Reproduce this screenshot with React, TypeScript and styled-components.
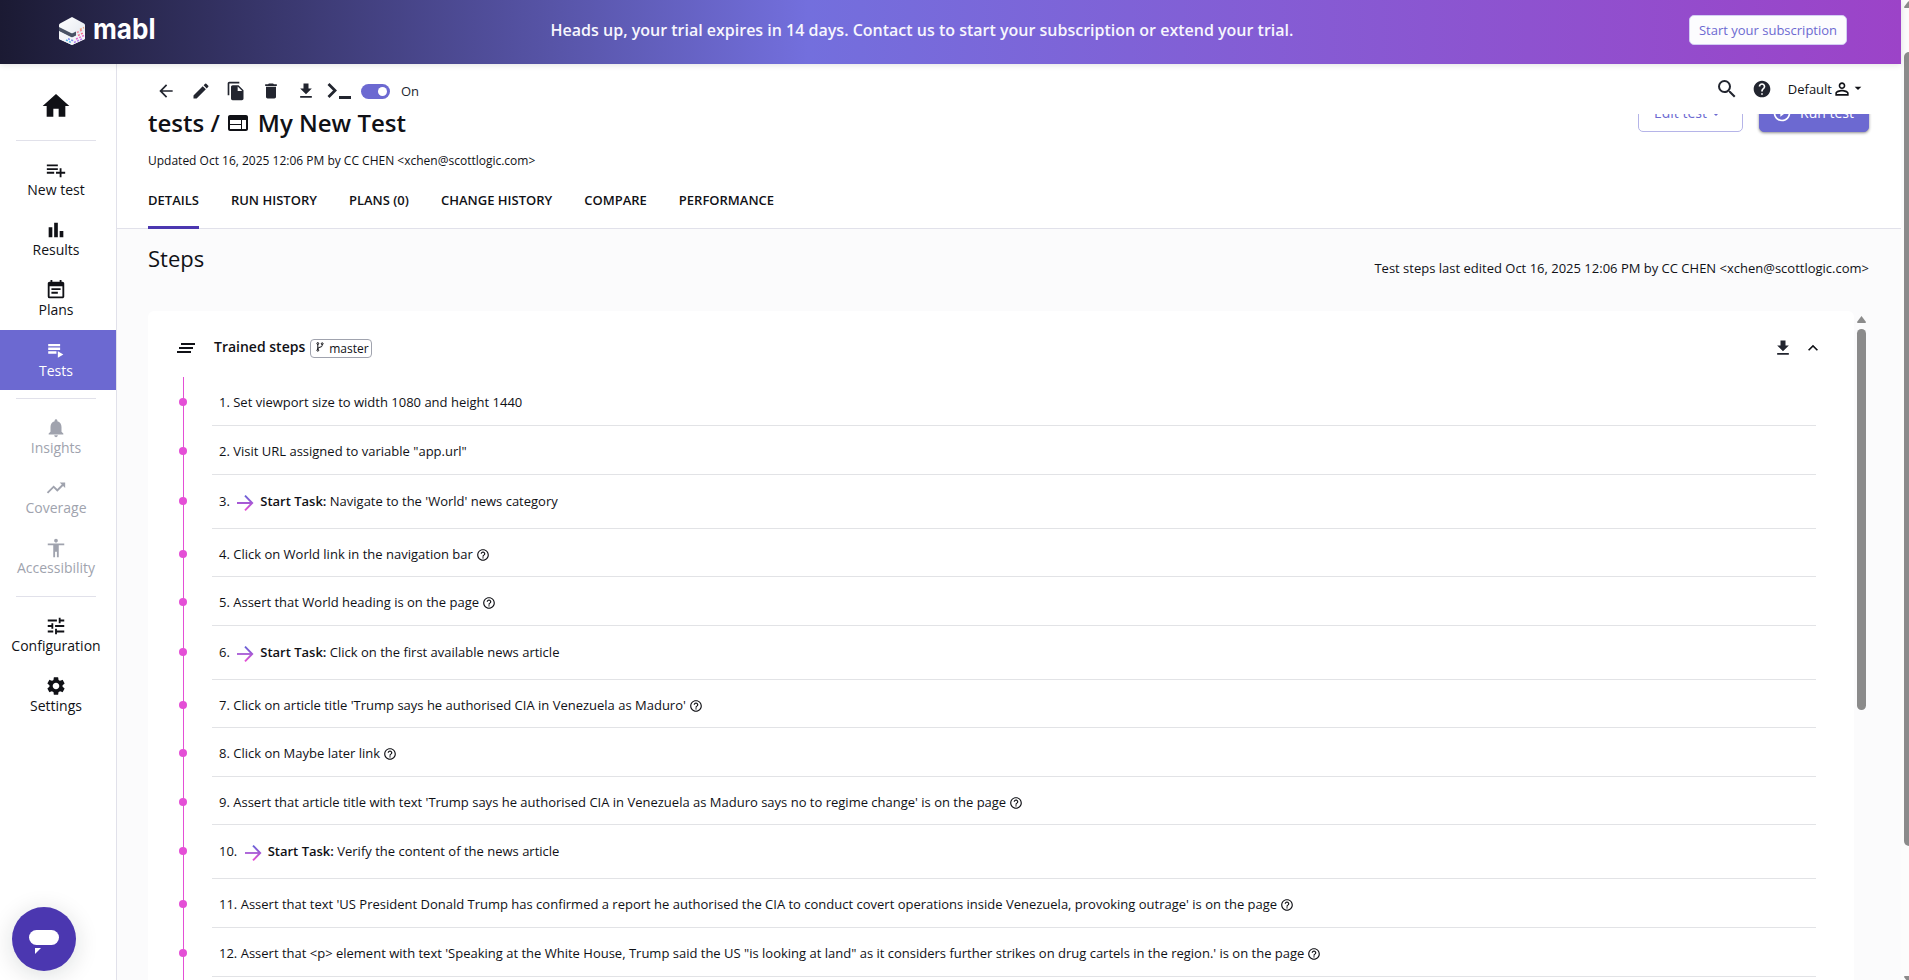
import React from "react";
import styled, { createGlobalStyle } from "styled-components";
import {
  MdAccessibility,
  MdArrowBack,
  MdArrowDropDown,
  MdBarChart,
  MdClearAll,
  MdDelete,
  MdEdit,
  MdEventNote,
  MdExpandLess,
  MdFileCopy,
  MdFileDownload,
  MdHelp,
  MdHelpOutline,
  MdHome,
  MdNotifications,
  MdPermIdentity,
  MdPlayCircleOutline,
  MdSearch,
  MdSettings,
  MdTrendingUp,
  MdTune,
  MdWeb,
} from "react-icons/md";

const GlobalStyle = createGlobalStyle`
  * { box-sizing: border-box; }
  body {
    margin: 0;
    overflow: hidden;
    background: #fbfbfc;
    color: #101116;
    font-family: "Open Sans", "Noto Sans", sans-serif;
    font-size: 13px;
  }
  svg { display: block; flex: none; }
`;

const Window = styled.div`
  display: flex;
  width: 1909px;
  height: 980px;
  overflow: hidden;
`;

const AppShell = styled.div`
  display: flex;
  flex-direction: column;
  width: 1901px;
`;

const Banner = styled.header`
  position: relative;
  z-index: 3;
  display: grid;
  grid-template-columns: 500px 1fr 500px;
  align-items: center;
  height: 64px;
  flex: none;
  background: linear-gradient(90deg, #1b1a33 0%, #736fdd 42.5%, #9c43c8 100%);
  box-shadow: 0 1px 6px rgba(0, 0, 0, 0.12);
`;

const LogoSlot = styled.div`
  padding: 0 0 2px 58px;
`;

const LogoSvg = styled.svg`
  overflow: visible;
`;

const BannerText = styled.div`
  padding-right: 57px;
  padding-bottom: 4px;
  text-align: center;
  color: #f7f6fd;
  font-size: 16px;
  font-weight: 600;
  white-space: nowrap;
`;

const SubscribeButton = styled.button`
  justify-self: end;
  width: 158px;
  height: 30px;
  margin: 0 54px 4px 0;
  padding: 0;
  border: 1px solid #d3cdf3;
  border-radius: 5px;
  background: #fcfcfe;
  color: #6c69d1;
  font: 400 13px "Open Sans", sans-serif;
`;

const Body = styled.div`
  display: flex;
  flex: 1;
  min-height: 0;
`;

const Sidebar = styled.nav`
  display: flex;
  flex-direction: column;
  width: 117px;
  flex: none;
  border-right: 1px solid #e1e1ea;
  background: #fff;
`;

const HomeLink = styled.div`
  display: flex;
  justify-content: center;
  height: 76px;
  padding: 26px 4px 0 0;
`;

const Divider = styled.div`
  width: 80px;
  height: 1px;
  margin-left: 16px;
  background: #e1e1ea;
`;

const NavGroup = styled.div`
  display: flex;
  flex-direction: column;
  padding: 9px 0 8px;
`;

const NavItem = styled.div<{ $state?: "active" | "muted" }>`
  display: flex;
  flex-direction: column;
  align-items: center;
  height: 60px;
  padding: 9px 4px 0 0;
  font-size: 14px;
  line-height: 20px;
  color: ${(p) =>
    p.$state === "active" ? "#fff" : p.$state === "muted" ? "#a0a3ae" : "#101116"};
  background: ${(p) => (p.$state === "active" ? "#6c69d1" : "transparent")};

  svg { margin-bottom: ${(p) => (p.$state === "active" ? 0 : -1)}px; }
`;

const Main = styled.main`
  display: flex;
  flex-direction: column;
  flex: 1;
  min-width: 0;
`;

const AppBar = styled.div`
  position: relative;
  z-index: 2;
  display: flex;
  justify-content: space-between;
  height: 50px;
  flex: none;
  padding: 0 0 0 39px;
  background: #fff;
  color: #22252f;
`;

const Tools = styled.div`
  display: flex;
  align-items: center;
  gap: 15px;
  height: 54px;
`;

const TerminalSlot = styled.div`
  margin: 0 1px 0 -4px;
`;

const Toggle = styled.div`
  display: flex;
  justify-content: flex-end;
  align-items: center;
  width: 29px;
  height: 15px;
  padding-right: 3px;
  margin-left: -6px;
  border-radius: 8px;
  background: #6c69d1;

  &::after {
    content: "";
    width: 9px;
    height: 9px;
    border-radius: 50%;
    background: #fff;
  }
`;

const ToggleLabel = styled.span`
  margin: 0 0 1px -4px;
  font-size: 13px;
`;

const Account = styled.div`
  display: flex;
  align-items: center;
  gap: 13px;
  height: 50px;
  padding-right: 35px;
`;

const Workspace = styled.div`
  display: flex;
  align-items: center;
  margin-left: 3px;
  color: #101116;
  font-size: 13px;

  svg:last-child { margin: -2px 0 0 -2px; }
`;

const PageHeader = styled.section`
  display: flex;
  justify-content: space-between;
  height: 115px;
  flex: none;
  padding: 0 32px 0 31px;
  border-bottom: 1px solid #e1e1ea;
  background: #fff;
`;

const HeaderText = styled.div`
  display: flex;
  flex-direction: column;
`;

const Title = styled.h1`
  display: flex;
  align-items: center;
  height: 32px;
  margin: -8px 0 0;
  font-size: 24px;
  font-weight: 600;
  white-space: pre;

  svg { margin: 2px 8px 0 6px; }
`;

const Updated = styled.div`
  height: 20px;
  margin-top: 13px;
  font-size: 12px;
  line-height: 20px;
`;

const Tabs = styled.div`
  display: flex;
  gap: 32px;
  margin-top: 15px;
`;

const Tab = styled.div<{ $active?: boolean }>`
  height: 43px;
  border-bottom: 3px solid ${(p) => (p.$active ? "#4b37b0" : "transparent")};
  font-size: 13px;
  font-weight: 600;
  line-height: 28px;
  white-space: nowrap;
`;

const Actions = styled.div`
  display: flex;
  gap: 16px;
  margin-top: -20px;
`;

const ActionButton = styled.button<{ $primary?: boolean }>`
  display: flex;
  align-items: center;
  justify-content: center;
  width: ${(p) => (p.$primary ? 110 : 105)}px;
  height: 38px;
  padding: ${(p) => (p.$primary ? "0 2px 2px 0" : "0 3px 2px 0")};
  gap: ${(p) => (p.$primary ? 8 : 1)}px;
  border: 1px solid ${(p) => (p.$primary ? "#6c69d1" : "#b5b4e8")};
  border-radius: 5px;
  background: ${(p) => (p.$primary ? "#6c69d1" : "#fff")};
  color: ${(p) => (p.$primary ? "#fff" : "#6c69d1")};
  box-shadow: ${(p) => (p.$primary ? "0 1px 3px rgba(0, 0, 0, 0.45)" : "none")};
  font: 500 14px "Open Sans", sans-serif;

  svg { margin-top: ${(p) => (p.$primary ? 1 : 4)}px; }
`;

const Content = styled.section`
  display: flex;
  flex-direction: column;
  flex: 1;
  min-height: 0;
  padding: 0 32px 0 31px;
`;

const SectionHead = styled.div`
  display: flex;
  justify-content: space-between;
  height: 82px;
  flex: none;
`;

const SectionTitle = styled.h2`
  margin: 13px 0 0;
  font-size: 22px;
  font-weight: 400;
  line-height: 32px;
`;

const LastEdited = styled.div`
  margin-top: 29px;
  font-size: 13px;
  line-height: 20px;
`;

const ScrollArea = styled.div`
  display: flex;
  flex: 1;
  min-height: 0;
`;

const Card = styled.div`
  flex: 1;
  min-width: 0;
  overflow: hidden;
  padding: 0 38px 0 28px;
  border-radius: 6px 6px 0 0;
  background: #fff;
`;

const CardHead = styled.div`
  display: flex;
  align-items: center;
  height: 66px;
  margin-left: -2px;
  padding-top: 8px;
`;

const CardTitle = styled.div`
  margin-left: 16px;
  padding-bottom: 3px;
  font-size: 14px;
  font-weight: 600;
`;

const Branch = styled.div`
  display: flex;
  align-items: center;
  width: 62px;
  height: 19px;
  margin-left: 5px;
  padding-left: 5px;
  gap: 5px;
  border: 1px solid #a0a3ae;
  border-radius: 4px;
  font-size: 12px;
  font-weight: 500;

  svg { margin-bottom: 3px; }
`;

const HeadActions = styled.div`
  display: flex;
  gap: 10px;
  margin-left: auto;
  margin-right: -7px;
`;

const Step = styled.div<{ $height: number }>`
  display: flex;
  height: ${(p) => p.$height}px;
`;

const Rail = styled.div<{ $task?: boolean }>`
  display: flex;
  justify-content: center;
  width: 15px;
  margin-right: 21px;
  padding: ${(p) => (p.$task ? 22 : 21)}px 0.4px 0 0;
  background: linear-gradient(#e44fd6, #e44fd6) 7px 0 / 1px 100% no-repeat;

  &::before {
    content: "";
    width: 8px;
    height: 8px;
    border-radius: 50%;
    background: #e44fd6;
  }
`;

const StepBody = styled.div<{ $task?: boolean }>`
  display: flex;
  align-items: flex-start;
  flex: 1;
  padding: ${(p) => (p.$task ? 16 : 15)}px 0 0 7px;
  border-bottom: 1px solid #e2e3e6;
  font-size: 13px;
  line-height: 20px;
  white-space: pre;

  b { font-weight: 600; }
`;

const HelpMark = styled(MdHelpOutline)`
  margin: 4px 0 0 3px;
`;

const TaskArrow = styled.svg`
  margin: 0 3px 0 0;
`;

const ScrollTrack = styled.div`
  display: flex;
  flex-direction: column;
  align-items: center;
  width: 15px;
  padding-top: 5px;
  gap: 6px;
`;

const ScrollThumb = styled.div`
  width: 9px;
  height: 381px;
  border-radius: 5px;
  background: #8b8b8b;
`;

const WindowTrack = styled.div`
  display: flex;
  flex-direction: column;
  width: 8px;
  padding: 1px 0 0 3px;
  overflow: hidden;
  background: #fcfcfc;
`;

const WindowThumb = styled.div`
  width: 10px;
  height: 794px;
  flex: none;
  margin: 44px 0 130px;
  border-radius: 5px;
  background: #8b8b8b;
`;

const ChatButton = styled.button`
  position: fixed;
  left: 12px;
  bottom: 9px;
  display: flex;
  align-items: center;
  justify-content: center;
  width: 64px;
  height: 64px;
  padding: 8px 0 0;
  border: 0;
  border-radius: 50%;
  background: #4b37b0;
  box-shadow: 0 4px 24px rgba(0, 30, 30, 0.14);
`;

const Logo = () => (
  <LogoSvg width="120" height="32" viewBox="0 0 120 32">
    <defs>
      <linearGradient id="cube" x1="0" y1="0" x2="1" y2="1">
        <stop offset="0" stopColor="#ffffff" />
        <stop offset="1" stopColor="#dfe4ec" />
      </linearGradient>
    </defs>
    <path d="M14 2 26 8.5Q27 9 27 10V23Q27 24 26 24.6L14 30 2 24.6Q1 24 1 23V10Q1 9 2 8.5Z" fill="url(#cube)" />
    <path d="M1 12 13 18Q14 18.5 15 18L18 16.5V20.5L15 22Q14 22.5 13 22L1 16Z" fill="#4a5265" />
    <path d="M1 16.5 13 22.5Q14 23 15 22.5L27 16V23Q27 24 26 24.6L14 30 2 24.6Q1 24 1 23Z" fill="#f3f4f8" />
    <g strokeWidth="1.5" strokeDasharray="2 1.4">
      <path d="M19 17.5 25 14.5" stroke="#f08fa0" />
      <path d="M20 20.5 26 17.5" stroke="#f26d8d" />
      <path d="M18 24 26 20.5" stroke="#e46ad0" />
      <path d="M16 27.5 25 23.5" stroke="#b27af0" />
      <path d="M8 25 13 27.5" stroke="#54b9e6" />
      <path d="M10 23.8 16 26" stroke="#7f8ef0" />
      <path d="M22 14.5 26 12.5" stroke="#f2a07a" />
    </g>
    <text
      x="35"
      y="23.6"
      textLength="62.5"
      lengthAdjust="spacingAndGlyphs"
      fontFamily="Inter, sans-serif"
      fontSize="28.5"
      fontWeight="700"
      fill="#fff"
    >
      mabl
    </text>
  </LogoSvg>
);

const PlaylistAddIcon = () => (
  <svg width="22" height="22" viewBox="0 0 24 24" fill="currentColor">
    <path d="M14 10H2v2h12v-2zm0-4H2v2h12V6zm4 8v-4h-2v4h-4v2h4v4h2v-4h4v-2h-4zM2 16h8v-2H2v2z" />
  </svg>
);

const PlaylistPlayIcon = () => (
  <svg width="22" height="22" viewBox="0 0 24 24" fill="currentColor">
    <path d="M3.5 9.4h13v2.6h-13zm0-4h13v2.6h-13zm0 8h9v2.6h-9zm10.5 0v7l6-3.5z" />
  </svg>
);

const TerminalIcon = () => (
  <svg width="24" height="18" viewBox="0 0 24 18">
    <path d="M1.5 2 8 8.5 1.5 15" fill="none" stroke="currentColor" strokeWidth="2.8" />
    <path d="M12 14h12v3H12z" fill="currentColor" />
  </svg>
);

const BranchIcon = () => (
  <svg width="8" height="10" viewBox="0 0 8 10" fill="none" stroke="currentColor">
    <path d="M1.8 2v6M6.2 2.5v.8q0 1.7-2.2 1.9-2.2.2-2.2 1.8" strokeWidth="1" />
    <circle cx="1.8" cy="1.5" r=".9" />
    <circle cx="6.2" cy="1.7" r=".9" />
    <circle cx="1.8" cy="8.3" r=".9" />
  </svg>
);

const StartArrow = () => (
  <TaskArrow width="24" height="24" viewBox="0 0 24 24">
    <defs>
      <linearGradient id="task" x1="0" y1="4" x2="0" y2="20" gradientUnits="userSpaceOnUse">
        <stop offset="0" stopColor="#5f62d6" />
        <stop offset="1" stopColor="#ee4fd3" />
      </linearGradient>
    </defs>
    <path d="M12 4.6 19.2 12 12 19.4" fill="none" stroke="url(#task)" strokeWidth="1.9" />
    <path d="M4 11.1h14.6v1.8H4z" fill="url(#task)" />
  </TaskArrow>
);

const UpTriangle = () => (
  <svg width="9" height="7" viewBox="0 0 9 7">
    <path d="M4.5 0 9 6Q9 7 8 7H1Q0 7 0 6Z" fill="#8b8b8b" />
  </svg>
);

const DownTriangle = () => (
  <svg width="9" height="7" viewBox="0 0 9 7">
    <path d="M4.5 7 9 1Q9 0 8 0H1Q0 0 0 1Z" fill="#8b8b8b" />
  </svg>
);

type StepData = { h: number; text: string; task?: boolean; help?: boolean };

const steps: StepData[] = [
  { h: 49, text: "Set viewport size to width 1080 and height 1440" },
  { h: 49, text: 'Visit URL assigned to variable "app.url"' },
  { h: 54, text: "Navigate to the 'World' news category", task: true },
  { h: 48, text: "Click on World link in the navigation bar", help: true },
  { h: 49, text: "Assert that World heading is on the page", help: true },
  { h: 54, text: "Click on the first available news article", task: true },
  { h: 48, text: "Click on article title 'Trump says he authorised CIA in Venezuela as Maduro'", help: true },
  { h: 49, text: "Click on Maybe later link", help: true },
  {
    h: 48,
    text: "Assert that article title with text 'Trump says he authorised CIA in Venezuela as Maduro says no to regime change' is on the page",
    help: true,
  },
  { h: 54, text: "Verify the content of the news article", task: true },
  {
    h: 49,
    text: "Assert that text 'US President Donald Trump has confirmed a report he authorised the CIA to conduct covert operations inside Venezuela, provoking outrage' is on the page",
    help: true,
  },
  {
    h: 49,
    text: "Assert that <p> element with text 'Speaking at the White House, Trump said the US \"is looking at land\" as it considers further strikes on drug cartels in the region.' is on the page",
    help: true,
  },
  { h: 49, text: "" },
];

const tabs = ["DETAILS", "RUN HISTORY", "PLANS (0)", "CHANGE HISTORY", "COMPARE", "PERFORMANCE"];

export default function App() {
  return (
    <Window>
      <GlobalStyle />
      <AppShell>
        <Banner>
          <LogoSlot>
            <Logo />
          </LogoSlot>
          <BannerText>
            Heads up, your trial expires in 14 days. Contact us to start your subscription or extend your trial.
          </BannerText>
          <SubscribeButton>Start your subscription</SubscribeButton>
        </Banner>
        <Body>
          <Sidebar>
            <HomeLink>
              <MdHome size={32} />
            </HomeLink>
            <Divider />
            <NavGroup>
              <NavItem><PlaylistAddIcon />New test</NavItem>
              <NavItem><MdBarChart size={22} />Results</NavItem>
              <NavItem><MdEventNote size={22} />Plans</NavItem>
              <NavItem $state="active"><PlaylistPlayIcon />Tests</NavItem>
            </NavGroup>
            <Divider />
            <NavGroup>
              <NavItem $state="muted"><MdNotifications size={22} />Insights</NavItem>
              <NavItem $state="muted"><MdTrendingUp size={22} />Coverage</NavItem>
              <NavItem $state="muted"><MdAccessibility size={22} />Accessibility</NavItem>
            </NavGroup>
            <Divider />
            <NavGroup>
              <NavItem><MdTune size={22} />Configuration</NavItem>
              <NavItem><MdSettings size={22} />Settings</NavItem>
            </NavGroup>
          </Sidebar>
          <Main>
            <AppBar>
              <Tools>
                <MdArrowBack size={20} />
                <MdEdit size={20} />
                <MdFileCopy size={20} />
                <MdDelete size={20} />
                <MdFileDownload size={20} />
                <TerminalSlot><TerminalIcon /></TerminalSlot>
                <Toggle />
                <ToggleLabel>On</ToggleLabel>
              </Tools>
              <Account>
                <MdSearch size={24} />
                <MdHelp size={20} />
                <Workspace>
                  Default
                  <MdPermIdentity size={20} />
                  <MdArrowDropDown size={16} />
                </Workspace>
              </Account>
            </AppBar>
            <PageHeader>
              <HeaderText>
                <Title>
                  tests /<MdWeb size={24} />My New Test
                </Title>
                <Updated>Updated Oct 16, 2025 12:06 PM by CC CHEN &lt;xchen@scottlogic.com&gt;</Updated>
                <Tabs>
                  {tabs.map((t, i) => (
                    <Tab key={t} $active={i === 0}>{t}</Tab>
                  ))}
                </Tabs>
              </HeaderText>
              <Actions>
                <ActionButton>Edit test<MdArrowDropDown size={16} /></ActionButton>
                <ActionButton $primary><MdPlayCircleOutline size={20} />Run test</ActionButton>
              </Actions>
            </PageHeader>
            <Content>
              <SectionHead>
                <SectionTitle>Steps</SectionTitle>
                <LastEdited>Test steps last edited Oct 16, 2025 12:06 PM by CC CHEN &lt;xchen@scottlogic.com&gt;</LastEdited>
              </SectionHead>
              <ScrollArea>
                <Card>
                  <CardHead>
                    <MdClearAll size={24} />
                    <CardTitle>Trained steps</CardTitle>
                    <Branch><BranchIcon />master</Branch>
                    <HeadActions>
                      <MdFileDownload size={20} color="#22252f" />
                      <MdExpandLess size={20} />
                    </HeadActions>
                  </CardHead>
                  {steps.map((s, i) => (
                    <Step key={i} $height={s.h}>
                      <Rail $task={s.task} />
                      <StepBody $task={s.task}>
                        {s.text && `${i + 1}. `}
                        {s.task && <StartArrow />}
                        {s.task && <b>Start Task: </b>}
                        {s.text}
                        {s.help && <HelpMark size={14} />}
                      </StepBody>
                    </Step>
                  ))}
                </Card>
                <ScrollTrack>
                  <UpTriangle />
                  <ScrollThumb />
                </ScrollTrack>
              </ScrollArea>
            </Content>
          </Main>
        </Body>
      </AppShell>
      <WindowTrack>
        <UpTriangle />
        <WindowThumb />
        <DownTriangle />
      </WindowTrack>
      <ChatButton aria-label="Chat">
        <svg width="32" height="26" viewBox="0 0 32 26" fill="#fff">
          <rect x="1" y="0" width="30" height="15" rx="7.5" />
          <path d="M7 18h6l-6 6z" />
        </svg>
      </ChatButton>
    </Window>
  );
}
